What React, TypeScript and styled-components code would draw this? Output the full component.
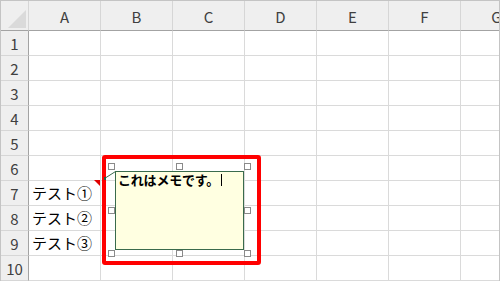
import React from 'react';
import styled, { createGlobalStyle } from 'styled-components';

const GlobalStyle = createGlobalStyle`
  html, body {
    margin: 0;
    padding: 0;
    background: #ffffff;
  }
  body {
    font-family: "Noto Sans CJK JP", "Noto Sans", sans-serif;
  }
`;

const Sheet = styled.div`
  position: relative;
  width: 500px;
  height: 281px;
  box-sizing: border-box;
  border: 1px solid #c4c4c4;
  border-bottom: none;
  overflow: hidden;
  background: #ffffff;
`;

const Grid = styled.div`
  display: grid;
  width: max-content;
  grid-template-columns: 28px repeat(7, 72px);
  grid-template-rows: 30px repeat(10, 25px);
`;

const HeadBase = styled.div`
  box-sizing: border-box;
  background: #efefef;
  color: #404040;
  font-family: "Noto Sans CJK JP", "Noto Sans", sans-serif;
  font-size: 15px;
  display: flex;
  align-items: center;
  justify-content: center;
`;

const Corner = styled(HeadBase)`
  position: relative;
  border-right: 1px solid #d6d6d6;
  border-bottom: 1px solid #a3a3a3;
`;

const CornerMark = styled.div`
  position: absolute;
  left: 7px;
  top: 9px;
  width: 18px;
  height: 18px;
  background: #dadada;
  clip-path: polygon(100% 0, 100% 100%, 0 100%);
`;

const ColHead = styled(HeadBase)`
  border-right: 1px solid #d6d6d6;
  border-bottom: 1px solid #a3a3a3;
  padding-top: 1px;
`;

const RowHead = styled(HeadBase)`
  border-right: 1px solid #a3a3a3;
  border-bottom: 1px solid #d6d6d6;
  padding-top: 1px;
`;

const Cell = styled.div`
  box-sizing: border-box;
  border-right: 1px solid #dadada;
  border-bottom: 1px solid #dadada;
  padding-left: 3px;
  font-family: "Noto Sans CJK JP", sans-serif;
  font-size: 15px;
  color: #000000;
  white-space: nowrap;
  display: flex;
  align-items: center;
  padding-bottom: 2px;
`;

/* red highlight drawn over the sheet around the comment */
const RedFrame = styled.div`
  position: absolute;
  left: 101px;
  top: 154px;
  width: 159px;
  height: 110px;
  box-sizing: border-box;
  border: 4px solid #ff0000;
  border-radius: 3px;
  padding: 4px 0 0 2px;
`;

/* selection frame: handles on a 3x3 grid, memo in the middle */
const Selection = styled.div`
  display: grid;
  width: 143px;
  height: 94px;
  grid-template-columns: 7px 1fr 7px;
  grid-template-rows: 7px 1fr 7px;
`;

const Handle = styled.div<{ $col: number; $row: number }>`
  grid-column: ${(p) => p.$col};
  grid-row: ${(p) => p.$row};
  align-self: center;
  justify-self: center;
  width: 7px;
  height: 7px;
  box-sizing: border-box;
  border: 1px solid #8a8a8a;
  background: #ffffff;
`;

const Memo = styled.div`
  grid-column: 2;
  grid-row: 2;
  margin-top: 1px;
  box-sizing: border-box;
  border: 1px solid #3a6b4c;
  background: #ffffe1;
  padding: 0 2px;
  font-family: "Noto Sans CJK JP", sans-serif;
  font-weight: 700;
  font-size: 13px;
  line-height: 16px;
  color: #000000;
  white-space: nowrap;
  letter-spacing: -0.2px;
`;

const Caret = styled.span`
  display: inline-block;
  width: 1px;
  height: 12px;
  margin-left: 2px;
  background: #000000;
  vertical-align: -1px;
`;

const Indicator = styled.div`
  position: absolute;
  left: 93px;
  top: 179px;
  width: 0;
  height: 0;
  border-top: 6px solid #e00000;
  border-left: 6px solid transparent;
`;

const Connector = styled.svg`
  position: absolute;
  left: 102px;
  top: 169px;
  overflow: visible;
`;

const cols = ['A', 'B', 'C', 'D', 'E', 'F', 'G'];
const rows = [1, 2, 3, 4, 5, 6, 7, 8, 9, 10];

const values: Record<string, string> = {
  A7: 'テスト①',
  A8: 'テスト②',
  A9: 'テスト③',
};

const handles = [
  [1, 1], [2, 1], [3, 1],
  [1, 2], [3, 2],
  [1, 3], [2, 3], [3, 3],
];

export default function App() {
  return (
    <>
      <GlobalStyle />
      <Sheet>
        <Grid>
          <Corner>
            <CornerMark />
          </Corner>
          {cols.map((c) => (
            <ColHead key={c}>{c}</ColHead>
          ))}
          {rows.map((r) => (
            <React.Fragment key={r}>
              <RowHead>{r}</RowHead>
              {cols.map((c) => (
                <Cell key={c + r}>{values[c + r] ?? ''}</Cell>
              ))}
            </React.Fragment>
          ))}
        </Grid>

        <Indicator />
        <RedFrame>
          <Selection>
            {handles.map(([c, r]) => (
              <Handle key={`${c}-${r}`} $col={c} $row={r} />
            ))}
            <Memo>
              これはメモです。
              <Caret />
            </Memo>
          </Selection>
        </RedFrame>
        <Connector width="14" height="11" viewBox="0 0 14 11">
          <line x1="1.5" y1="8.5" x2="12.5" y2="1.5" stroke="#3a6b4c" strokeWidth="1" />
          <rect x="1" y="7" width="2" height="3" fill="#2f5a3f" />
        </Connector>
      </Sheet>
    </>
  );
}
